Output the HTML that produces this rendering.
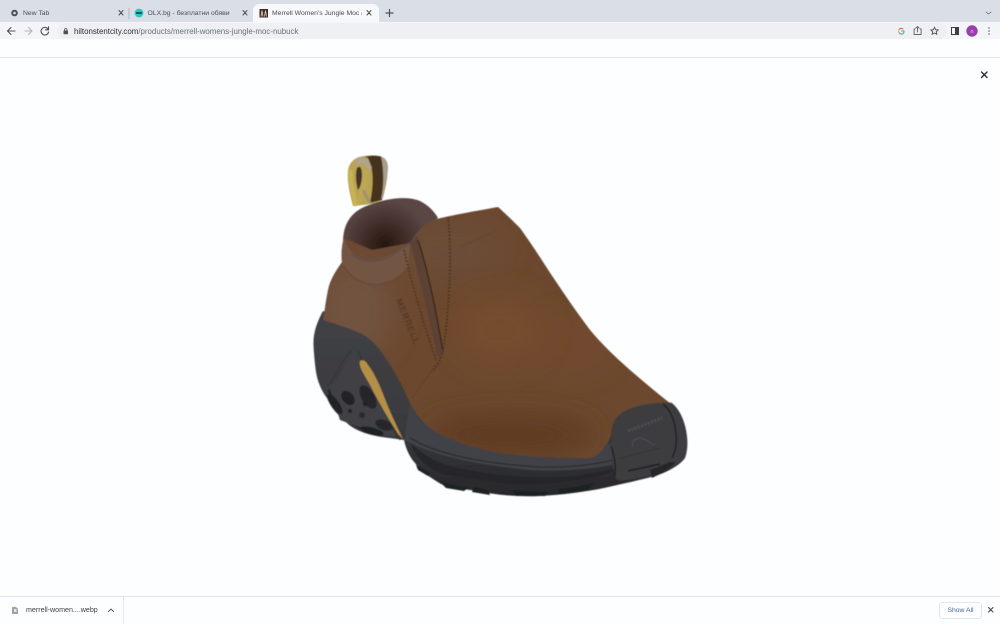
<!DOCTYPE html>
<html>
<head>
<meta charset="utf-8">
<title>Merrell Women's Jungle Moc</title>
<style>
html,body{margin:0;padding:0;width:1000px;height:625px;overflow:hidden;background:#fdfeff;font-family:"Liberation Sans","Noto Sans CJK SC",sans-serif;color:#3c4043}
#all{position:absolute;left:0;top:0;width:1000px;height:625px;filter:blur(.3px)}
.a{position:absolute;white-space:nowrap}
#tabs{left:0;top:0;width:1000px;height:22px;background:#dadfe7}
#active{left:253px;top:4px;width:126px;height:18px;background:#f7f8fa;border-radius:6px 6px 0 0}
#tool{left:0;top:22px;width:1000px;height:17px;background:#f3f5f8}
#omni{left:57px;top:23px;width:890px;height:16px;background:#eef0f4;border-radius:8px}
#strip{left:0;top:39px;width:1000px;height:18px;background:#fdfeff;border-bottom:1px solid #e4e8ee}
.t{font-size:6.8px;line-height:10px;top:8.500px;color:#4a4e55}
#bar{left:0;top:596px;width:1000px;height:29px;background:#fdfeff;border-top:1px solid #dfe5ec}
svg{position:absolute;overflow:visible}
</style>
</head>
<body>
<div id="all">
<div class="a" id="tabs"></div>
<div class="a" id="active"></div>
<div class="a" id="tool"></div>
<div class="a" id="omni"></div>
<div class="a" id="strip"></div>

<div class="a t" style="left:23px">New Tab</div>
<div class="a t" style="left:147.5px">OLX.bg - безплатни обяви</div>
<div class="a t" style="left:272px;width:90px;overflow:hidden">Merrell Women's Jungle Moc a</div>
<div class="a" style="left:74px;top:25.5px;font-size:7.9px;line-height:11px;color:#6b7078"><span style="color:#2c2f34">hiltonstentcity.com</span>/products/merrell-womens-jungle-moc-nubuck</div>

<div class="a" id="bar"></div>
<div class="a" style="left:26px;top:605px;font-size:7.1px;line-height:10px;color:#3c4043">merrell-women....webp</div>
<div class="a" style="left:939px;top:602px;width:41px;height:15px;border:1px solid #e2e7ee;border-radius:3px;text-align:center;font-size:6.8px;line-height:15px;color:#4a6a94;background:#fdfeff">Show All</div>

<svg width="1000" height="625" viewBox="0 0 1000 625" style="left:0;top:0">
<defs>
<linearGradient id="sole" gradientUnits="userSpaceOnUse" x1="0" y1="320" x2="0" y2="495">
<stop offset="0" stop-color="#404145"/><stop offset=".6" stop-color="#393a3e"/><stop offset="1" stop-color="#27282b"/>
</linearGradient>
<radialGradient id="lin" gradientUnits="userSpaceOnUse" cx="385" cy="245" r="45">
<stop offset="0" stop-color="#24150f"/><stop offset=".4" stop-color="#3d2924"/><stop offset="1" stop-color="#5a4745"/>
</radialGradient>
<clipPath id="upclip"><path d="M323 320C325 310 326 298 329 286C332 276 338 268 342 262C341 252 342 244 344 238L372 250L410 243C412 240 414 236 417 233C422 226 428 222 433 220C448 216 470 212 498 207C508 216 514 222 520 228C530 242 538 254 545 265C560 288 575 310 590 330C600 342 612 354 630 370C644 382 658 394 670 403C660 402 642 404 632 408C622 411 614 418 612 427C612 436 608 443 605 446C600 454 595 457 590 458C560 458 530 457 500 453C478 449 452 442 433 430C424 424 416 414 410 403C402 384 392 366 380 350C374 342 368 337 360 333C348 328 336 324 323 320Z"/></clipPath>
<filter id="b1" x="-5%" y="-5%" width="110%" height="110%"><feGaussianBlur stdDeviation=".45"/></filter>
<filter id="b14" x="-60%" y="-60%" width="220%" height="220%"><feGaussianBlur stdDeviation="14"/></filter>
</defs>

<!-- browser icons -->
<g fill="none" stroke="#4d5156" stroke-width="1" stroke-linecap="round">
<circle cx="14.500" cy="13" r="3.300" fill="#4d5156" stroke="none"/>
<circle cx="14.500" cy="13" r="1.300" fill="#dadfe7" stroke="none"/>
<path d="M119 10.500l4 4.500M123 10.500l-4 4.500M243 10.500l4 4.500M247 10.500l-4 4.500M367 10.500l4 4.500M371 10.500l-4 4.500"/>
<path d="M386 13h7M389.500 9.500v7" stroke-width="1.200"/>
<path d="M129 8v11" stroke="#aab0b9" stroke-width=".8"/>
<path d="M15 31H8M11 27.500L7.500 31l3.500 3.500" stroke-width="1.100"/>
<path d="M32 31h-7M28.500 27.500L32 31l-3.500 3.500" stroke="#b4b8be" stroke-width="1.100"/>
<path d="M48 29a3.800 3.800 0 1 0 .6 3M48.500 26.800v3h-3" stroke-width="1.100"/>
<path d="M981.500 72l5.500 5.500M987 72l-5.500 5.500" stroke="#26282b" stroke-width="1.300"/>
<path d="M108.500 611.500l2.500-2.500 2.500 2.500" stroke-width=".9"/>
<path d="M988.500 607.500l4.500 4.500M993 607.500l-4.500 4.500" stroke-width="1.100" stroke="#44484d"/>
<path d="M123.500 597v27" stroke="#dfe4ea" stroke-width=".8"/>
<path d="M986 12l2.500 2 2.500-2" stroke="#666a70" stroke-width=".8"/>
<path d="M915 29h-.9v5.500h7V29h-.9M917.500 32v-5M915.800 28.200l1.700-1.700 1.700 1.700" stroke="#5f6368" stroke-width=".9"/>
<path d="M934.500 27.300l1.100 2.400 2.600.3-1.900 1.700.5 2.600-2.300-1.300-2.300 1.300.5-2.600-1.900-1.700 2.600-.3z" stroke-width=".9"/>
<rect x="951.500" y="27.500" width="7" height="7" stroke="#3c4043" stroke-width="1"/>
</g>
<rect x="955" y="27.500" width="3.500" height="7" fill="#3c4043"/>
<circle cx="972" cy="31" r="5.700" fill="#9a3db0"/>
<text x="972" y="33" font-size="5.500" text-anchor="middle" fill="#e9c9f0" font-family="Liberation Sans, sans-serif">n</text>
<g fill="#5f6368"><circle cx="989" cy="28" r=".8"/><circle cx="989" cy="31" r=".8"/><circle cx="989" cy="34" r=".8"/></g>
<rect x="63.500" y="30.500" width="4.500" height="3.700" rx=".6" fill="#4d5156"/>
<path d="M64.500 30.500v-1a1.300 1.300 0 0 1 2.500 0v1" fill="none" stroke="#4d5156" stroke-width=".8"/>
<g fill="none" stroke-width="1.100">
<path d="M903.300 29.200a2.900 2.900 0 0 0-4.300.3" stroke="#d9594c"/>
<path d="M899 29.500a2.900 2.900 0 0 0-.1 3" stroke="#e6bd4a"/>
<path d="M898.900 32.500a2.900 2.900 0 0 0 4.700.6" stroke="#62a86d"/>
<path d="M903.600 33.100a2.900 2.900 0 0 0 .3-2.100h-2.800" stroke="#6a8fd8"/>
</g>
<circle cx="139" cy="13" r="4.400" fill="#2cc7c4"/>
<g fill="#123a3a"><circle cx="137" cy="13" r="1"/><circle cx="139" cy="13" r="1"/><circle cx="141" cy="13" r="1"/></g>
<rect x="259.500" y="9" width="8.500" height="8.500" fill="#3d2a22"/>
<path d="M261 16.500l1-6 1 6M264.500 16.500l1-6 1 6" stroke="#d8cfc6" stroke-width=".8" fill="none"/>
<path d="M12 607h4l2 2v5h-6z" fill="#9ea2a6"/>
<path d="M14 609h2.500v3H14z" fill="#e3e5e7"/>
<circle cx="14.500" cy="607.500" r="1" fill="#d9a05a"/>

<!-- SHOE -->
<g filter="url(#b1)">
<!-- pull loop -->
<path d="M353 206C350 195 347 182 348 171C349 162 355 157 364 156C373 155 384 155 387 163C389 172 386 188 382 200L372 204Z" fill="#b8a452"/>
<path d="M362 158C368 155 378 155 382 157C384 170 384 188 382 200L370 203C373 190 374 172 370 164C368 161 365 159 362 158Z" fill="#46301f"/>
<path d="M381 156.500C385 158 387 160 388 166C388 176 385 190 383 198L381 199C384 186 384 170 381 156.500Z" fill="#a89d88"/>
<path d="M355 160C360 157 364 156 368 158L372 168L369 172C367 166 362 163 357 165Z" fill="#afa489"/>
<path d="M357 168C360 165 362 168 362 175C362 182 360 188 358 190C356 184 355 174 357 168Z" fill="#46362a"/>
<path d="M351 170C350 182 354 196 356 206" stroke="#c9b255" stroke-width="4" fill="none"/>
<path d="M365 170C366 180 362 192 358 205" stroke="#bda954" stroke-width="4" fill="none"/>
<path d="M363 190L370 203" stroke="#a09172" stroke-width="3" fill="none"/>

<!-- sole -->
<path d="M323 311C317 322 313 333 313.500 345C314 356 315 364 316 372C318 384 323 393 327 398C331 408 337 414 344 420C350 427 358 431 368 434C378 437 390 438 404 440C406 450 411 459 415 463C422 473 430 477 441 484C452 489 470 489 482 492C498 495 520 497 540 496C560 495 585 492 604 488C622 484 640 480 655 476C668 472 680 465 685 458C688 450 688 440 686 430C684 420 680 410 672 403L640 396L560 400L440 390L380 330Z" fill="url(#sole)"/>
<path d="M327 390C332 402 340 414 348 420L358 408L342 386Z" fill="#26272a"/>
<path d="M352 424C362 432 378 436 392 436L394 428C380 431 364 428 356 418Z" fill="#222326"/>
<path d="M412 448C418 458 426 466 441 474L500 483C530 486 560 484 600 476L625 468L607 470C560 482 500 478 450 466C430 460 420 452 412 444Z" fill="#27282b"/>
<path d="M329 386C335 386 340 374 347 362C350 356 352 352 355 352C362 362 378 394 396 437L380 435L340 420Z" fill="#3f4044"/>
<path d="M327 386C334 380 338 370 345 358L352 350" stroke="#303134" stroke-width=".8" fill="none"/>
<path d="M358 351L400 440" stroke="#303134" stroke-width="1" fill="none"/>
<ellipse cx="348" cy="398" rx="5.500" ry="8" transform="rotate(-40 348 398)" fill="#232427"/>
<ellipse cx="368" cy="397" rx="6.500" ry="13" transform="rotate(-30 368 397)" fill="#26272a"/>
<ellipse cx="384" cy="425" rx="9" ry="5" transform="rotate(20 384 425)" fill="#27282b"/>
<ellipse cx="335" cy="404" rx="4" ry="12" transform="rotate(-35 335 404)" fill="#232427"/>
<ellipse cx="372" cy="431" rx="12" ry="3.500" transform="rotate(15 372 431)" fill="#1f2023"/>
<circle cx="350" cy="411" r="2" fill="#232427"/><circle cx="365" cy="404" r="2" fill="#202124"/><circle cx="362" cy="415" r="3" fill="#2b2c2f"/>
<!-- yellow wedge -->
<path d="M360 361C363 359 366 361 368 365C375 374 380 386 385 399C390 412 396 425 403 439L398 434C388 418 378 401 370 385C365 376 358 366 360 361Z" fill="#b48f47"/>
<!-- lower midsole band -->
<path d="M404 440C440 458 480 465 530 470C570 472 600 468 626 462L628 448L605 443L590 457L500 453L433 430L410 403Z" fill="#414246"/>
<path d="M410 438C440 456 490 464 540 467C570 468 600 464 616 459" fill="none" stroke="#26272a" stroke-width="1.100"/>
<!-- toe cap -->
<path d="M612 427C614 418 622 411 632 408C642 404 660 402 668 403C676 408 682 418 685 430C688 442 687 452 684 458C676 466 665 472 650 476C642 477 624 482 617 480C612 470 610 450 612 427Z" fill="#3c3d41"/>
<path d="M663 404C671 410 675 422 676 434C677 444 675 452 672 458" stroke="#1e1f22" stroke-width="1.300" fill="none"/>
<path d="M611 446C614 454 616 464 615 476" stroke="#1c1d20" stroke-width="1.300" fill="none"/>
<path d="M618 459L660 448" stroke="#2d2e33" stroke-width=".8" fill="none"/>
<path d="M628 471L660 464" stroke="#1c1d20" stroke-width="1.500" fill="none"/>
<path d="M628 431L662 418" stroke="#4d4e54" stroke-width="3" fill="none" stroke-dasharray="2 1.500"/>
<path d="M633 447C630 440 638 436 646 440C652 444 654 446 655 444" stroke="#4d4e54" stroke-width="1" fill="none"/>
<path d="M652 478C660 474 668 470 676 462L670 462L650 470Z" fill="#252629"/>
<g fill="#1f2023">
<path d="M440 482L468 488L464 491L446 488Z"/>
<path d="M474 487L488 490L490 495L472 492Z"/>
<path d="M512 490C522 492 540 492 548 491L545 496H516Z"/>
<path d="M558 489C568 488 586 486 594 482L588 490L560 494Z"/>
<path d="M416 465L430 473L428 476L418 470Z"/>
</g>

<!-- lining -->
<path d="M343 240C344 222 352 210 372 204C388 198 408 196 420 201C428 205 434 211 438 218L418 233L406 250L382 265L350 262Z" fill="url(#lin)"/>

<!-- upper brown -->
<g clip-path="url(#upclip)">
<rect x="310" y="200" width="370" height="265" fill="#6c482e"/>
<ellipse cx="355" cy="310" rx="40" ry="50" fill="#715340" filter="url(#b14)"/>
<ellipse cx="450" cy="250" rx="55" ry="30" fill="#6c4d38" filter="url(#b14)"/>
<ellipse cx="510" cy="435" rx="85" ry="20" fill="#5f3a21" filter="url(#b14)"/>
<ellipse cx="570" cy="345" rx="40" ry="25" fill="#724a2d" filter="url(#b14)"/>
<ellipse cx="500" cy="330" rx="45" ry="35" fill="#754d2e" filter="url(#b14)"/>
</g>
<!-- heel collar padded band -->
<path d="M342 262C350 278 365 286 380 284C394 282 402 276 408 268L410 243C398 254 386 260 374 262C364 262 350 256 344 238C342 245 341 253 342 262Z" fill="#725543"/>
<path d="M344 266C354 282 368 286 380 284C392 282 400 278 407 268" fill="none" stroke="#5a4130" stroke-width=".8" opacity=".7"/>
<path d="M352 254C360 262 368 262 376 260C386 258 398 252 410 243" fill="none" stroke="#63504b" stroke-width="2"/>
<!-- elastic gore -->
<path d="M410 243L417 235C424 262 434 300 443 352C440 356 438 358 437 355C432 330 420 280 410 243Z" fill="#5c4234"/>
<path d="M418 240C428 270 436 310 443 352" fill="none" stroke="#33210f" stroke-width="1.200"/>
<path d="M404 250C412 285 424 325 436 360" fill="none" stroke="#543823" stroke-width="2" stroke-dasharray="2 1.500"/>
<path d="M448 217C452 250 450 300 444 345C442 356 438 366 432 372" fill="none" stroke="#523926" stroke-width="2.200" stroke-dasharray="2 1.500"/>
<path d="M435 365C425 380 418 390 412 398" fill="none" stroke="#563a23" stroke-width="1" stroke-dasharray="2 1.500" opacity=".7"/>
<path d="M462 246C475 240 486 236 498 230" fill="none" stroke="#60432e" stroke-width="1" stroke-dasharray="2 1.500"/>
<path d="M498 210C515 230 530 252 544 272" fill="none" stroke="#60432e" stroke-width="1" stroke-dasharray="2 1.500" opacity=".6"/>
<text x="0" y="0" font-size="9" font-weight="bold" fill="#553a25" transform="translate(396,300) rotate(68)" letter-spacing=".8" font-family="Liberation Sans, sans-serif">MERRELL</text>
</g>
</svg>
</div>
</body>
</html>
